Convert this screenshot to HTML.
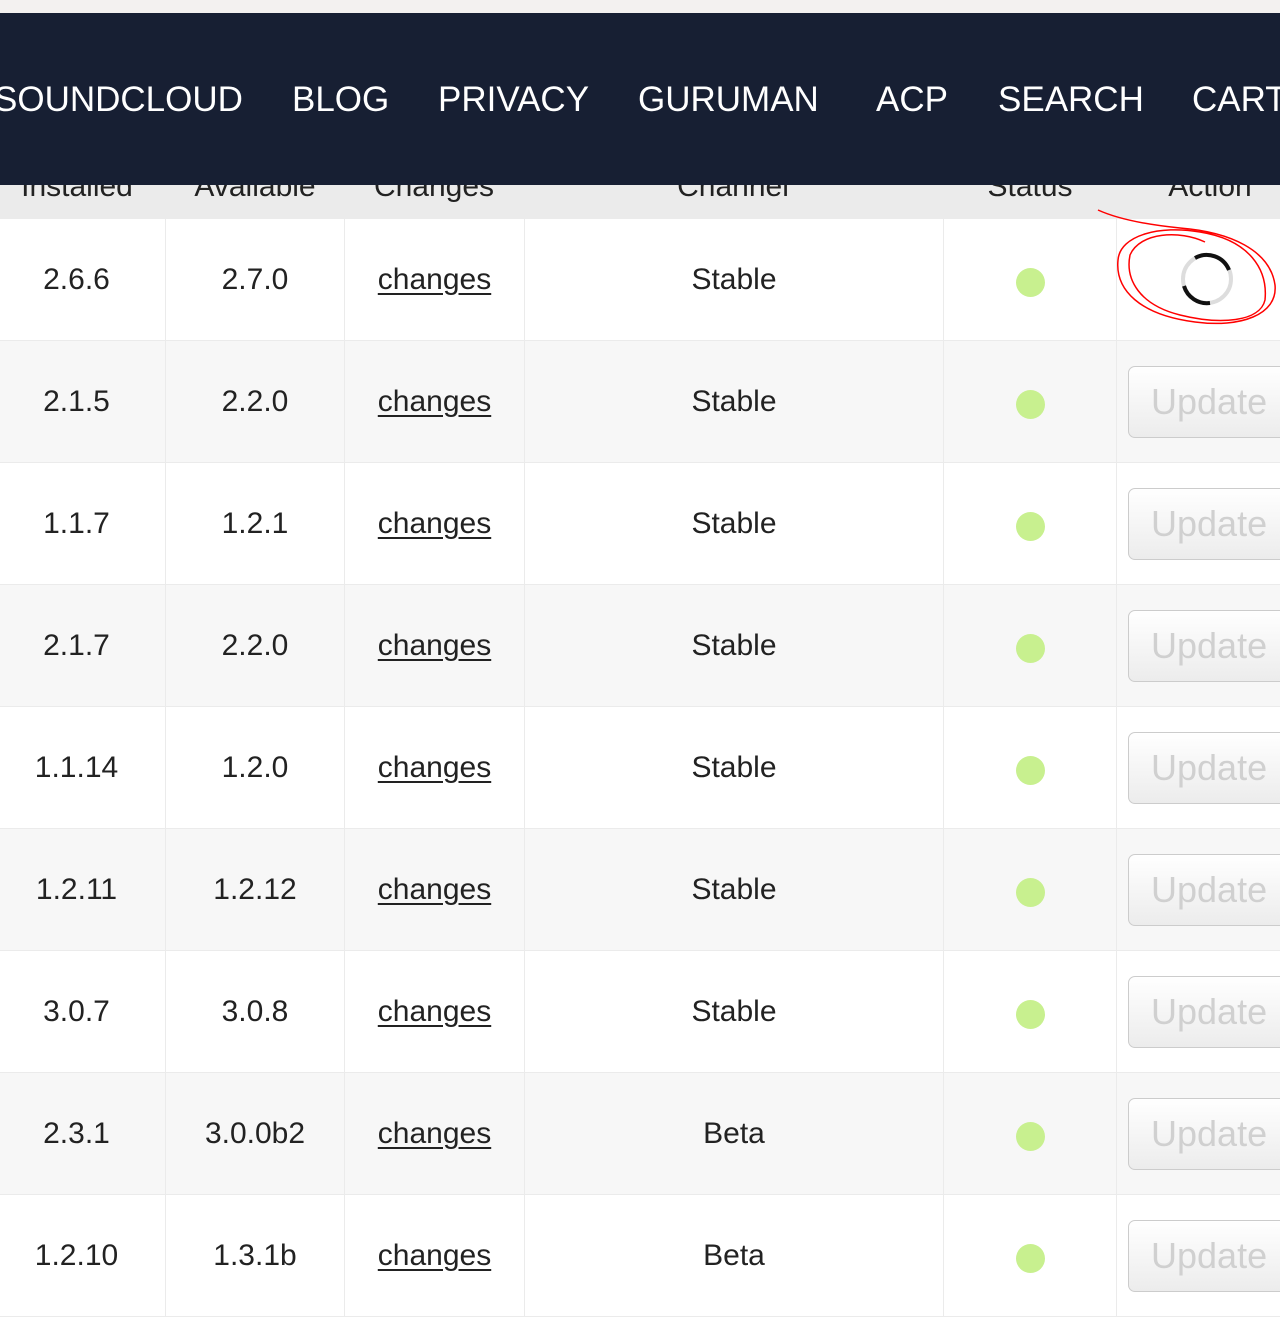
<!DOCTYPE html>
<html><head><meta charset="utf-8"><style>
html,body{margin:0;padding:0;width:1280px;height:1283px;overflow:hidden;background:#fff;font-family:"Liberation Sans",sans-serif;color:#222;}
.top{position:absolute;left:0;top:0;width:1280px;height:13px;background:#f3f1f0;}
.nav{position:absolute;left:0;top:13px;width:1280px;height:172px;background:#171f33;z-index:2;}
.nav span{position:absolute;top:65px;color:#fff;font-size:35px;line-height:44px;white-space:nowrap;}
.hdr{position:absolute;left:0;top:160px;width:1280px;height:58px;background:#ebebeb;}
.hdr span{position:absolute;top:10px;font-size:30px;color:#222;transform:translateX(-50%);white-space:nowrap;}
table{position:absolute;left:-1px;top:218px;border-collapse:collapse;table-layout:fixed;width:1300px;}
td{height:121px;border:1px solid #ebebeb;text-align:center;vertical-align:middle;font-size:30px;padding:0;}
td:first-child{padding-right:12px;}
tr:nth-child(even) td{background:#f7f7f7;}
td a{color:#222;text-decoration:underline;text-decoration-thickness:2px;text-underline-offset:4px;}
.dot{display:inline-block;width:29px;height:29px;border-radius:50%;background:#c8f08f;vertical-align:middle;margin-top:3px;}
.btn{display:inline-block;vertical-align:middle;margin-left:11px;width:170px;height:72px;border:1px solid #ccc;border-radius:7px;background:linear-gradient(#fff,#ececec);color:#d0d0d0;font-size:36px;line-height:70px;text-align:left;padding-left:22px;box-sizing:border-box;}
td.act{text-align:left;}
</style></head><body>
<div class="top"></div>
<div class="nav">
<span style="left:-6px">SOUNDCLOUD</span>
<span style="left:292px">BLOG</span>
<span style="left:438px">PRIVACY</span>
<span style="left:638px">GURUMAN</span>
<span style="left:876px">ACP</span>
<span style="left:998px">SEARCH</span>
<span style="left:1192px">CART</span>
</div>
<div class="hdr">
<span style="left:77px">Installed</span>
<span style="left:255px">Available</span>
<span style="left:434px">Changes</span>
<span style="left:733px">Channel</span>
<span style="left:1030px">Status</span>
<span style="left:1210px">Action</span>
</div>
<table>
<colgroup><col style="width:166px"><col style="width:179px"><col style="width:180px"><col style="width:419px"><col style="width:173px"><col style="width:184px"></colgroup>
<tr><td>2.6.6</td><td>2.7.0</td><td><a>changes</a></td><td>Stable</td><td><span class="dot"></span></td><td class="act"></td></tr>
<tr><td>2.1.5</td><td>2.2.0</td><td><a>changes</a></td><td>Stable</td><td><span class="dot"></span></td><td class="act"><span class="btn">Update</span></td></tr>
<tr><td>1.1.7</td><td>1.2.1</td><td><a>changes</a></td><td>Stable</td><td><span class="dot"></span></td><td class="act"><span class="btn">Update</span></td></tr>
<tr><td>2.1.7</td><td>2.2.0</td><td><a>changes</a></td><td>Stable</td><td><span class="dot"></span></td><td class="act"><span class="btn">Update</span></td></tr>
<tr><td>1.1.14</td><td>1.2.0</td><td><a>changes</a></td><td>Stable</td><td><span class="dot"></span></td><td class="act"><span class="btn">Update</span></td></tr>
<tr><td>1.2.11</td><td>1.2.12</td><td><a>changes</a></td><td>Stable</td><td><span class="dot"></span></td><td class="act"><span class="btn">Update</span></td></tr>
<tr><td>3.0.7</td><td>3.0.8</td><td><a>changes</a></td><td>Stable</td><td><span class="dot"></span></td><td class="act"><span class="btn">Update</span></td></tr>
<tr><td>2.3.1</td><td>3.0.0b2</td><td><a>changes</a></td><td>Beta</td><td><span class="dot"></span></td><td class="act"><span class="btn">Update</span></td></tr>
<tr><td>1.2.10</td><td>1.3.1b</td><td><a>changes</a></td><td>Beta</td><td><span class="dot"></span></td><td class="act"><span class="btn">Update</span></td></tr>
</table>
<svg style="position:absolute;left:0;top:0;z-index:3" width="1280" height="1283">
<circle cx="1207" cy="279" r="24" fill="none" stroke="#ddd" stroke-width="4"/>
<path d="M1195 258 A24 24 0 0 1 1229 270" fill="none" stroke="#111" stroke-width="4"/>
<path d="M1184 286 A24 24 0 0 0 1210 303" fill="none" stroke="#111" stroke-width="4"/>
<path d="M1098 210 C1120 220,1150 225,1180 228 C1230 232,1270 250,1275 285 C1278 315,1240 328,1195 322 C1140 315,1115 290,1118 260 C1120 235,1160 225,1200 232 C1250 240,1268 270,1265 300 C1260 322,1220 325,1180 315 C1140 305,1125 280,1130 255 C1140 232,1180 230,1205 242" fill="none" stroke="#f00" stroke-width="1.5"/>
</svg>
</body></html>
